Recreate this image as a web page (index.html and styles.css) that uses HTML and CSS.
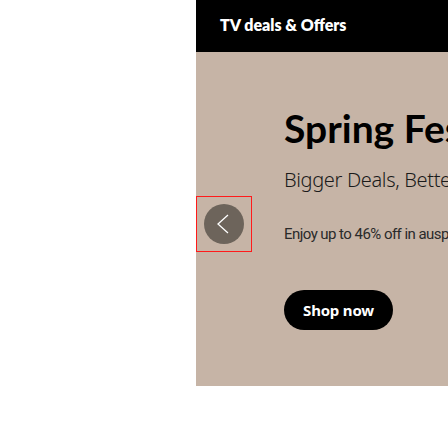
FILE: index.html
```html
<!DOCTYPE html>
<html>
<head>
<meta charset="utf-8">
<link rel="stylesheet" href="styles.css">
</head>
<body>
<div class="page">
  <div class="gutter"></div>
  <main class="panel">
    <header class="topbar"><h1 class="topbar-title">TV deals &amp; Offers</h1></header>
    <section class="hero">
      <button class="nav-prev" aria-label="Previous">
        <span class="nav-circle">
          <svg width="40" height="40" viewBox="0 0 40 40"><path d="M24 11 L14 20 L24 29" fill="none" stroke="#fff" stroke-width="1.3"/></svg>
        </span>
      </button>
      <div class="hero-content">
        <h2 class="hero-title">Spring Festival Sale</h2>
        <p class="hero-sub">Bigger Deals, Better Savings</p>
        <p class="hero-desc">Enjoy up to 46% off in auspicious deals this spring</p>
        <a class="btn-shop" href="#">Shop now</a>
      </div>
    </section>
  </main>
</div>
</body>
</html>
```
FILE: styles.css
```css
html, body { margin: 0; padding: 0; background: #fff; }
.page { display: flex; width: 448px; height: 448px; }
.gutter { width: 196px; flex: none; }
.panel { width: 252px; flex: none; overflow: hidden; }
.topbar { height: 52px; background: #000; display: flex; align-items: center; padding-left: 24px; box-sizing: border-box; }
.topbar-title { margin: 0; color: #fff; font-family: "Lato", sans-serif; font-weight: 800; font-size: 16px; letter-spacing: 0; white-space: nowrap; padding-bottom: 4px; }
.hero { position: relative; height: 334px; background: #c6b4a6; }
.nav-prev { position: absolute; left: 0; top: 144px; width: 56px; height: 56px; box-sizing: border-box; border: 1px solid #ff1a1a; background: none; padding: 0; display: flex; align-items: center; justify-content: center; }
.nav-circle { width: 40px; height: 40px; border-radius: 50%; background: #6d645b; display: block; }
.nav-circle svg { display: block; }
.hero-content { padding: 52px 0 0 88px; white-space: nowrap; }
.hero-title { margin: 0; font-family: "Lato", sans-serif; font-weight: 700; font-size: 39px; line-height: 48px; color: #000; letter-spacing: 0; }
.hero-sub { margin: 14px 0 0; font-family: "Noto Sans", sans-serif; font-weight: 300; font-size: 20px; line-height: 28px; color: #1a1a1a; letter-spacing: -0.35px; }
.hero-desc { margin: 30px 0 0; font-family: "Roboto", sans-serif; font-weight: 400; font-size: 15px; line-height: 20px; color: #2a2a2a; letter-spacing: -0.55px; }
.btn-shop { display: inline-flex; align-items: center; justify-content: center; margin-top: 46px; width: 109px; height: 40px; border-radius: 20px; background: #000; color: #fff; text-decoration: none; font-family: "Noto Sans", sans-serif; font-weight: 700; font-size: 15px; letter-spacing: -0.2px; }
```
